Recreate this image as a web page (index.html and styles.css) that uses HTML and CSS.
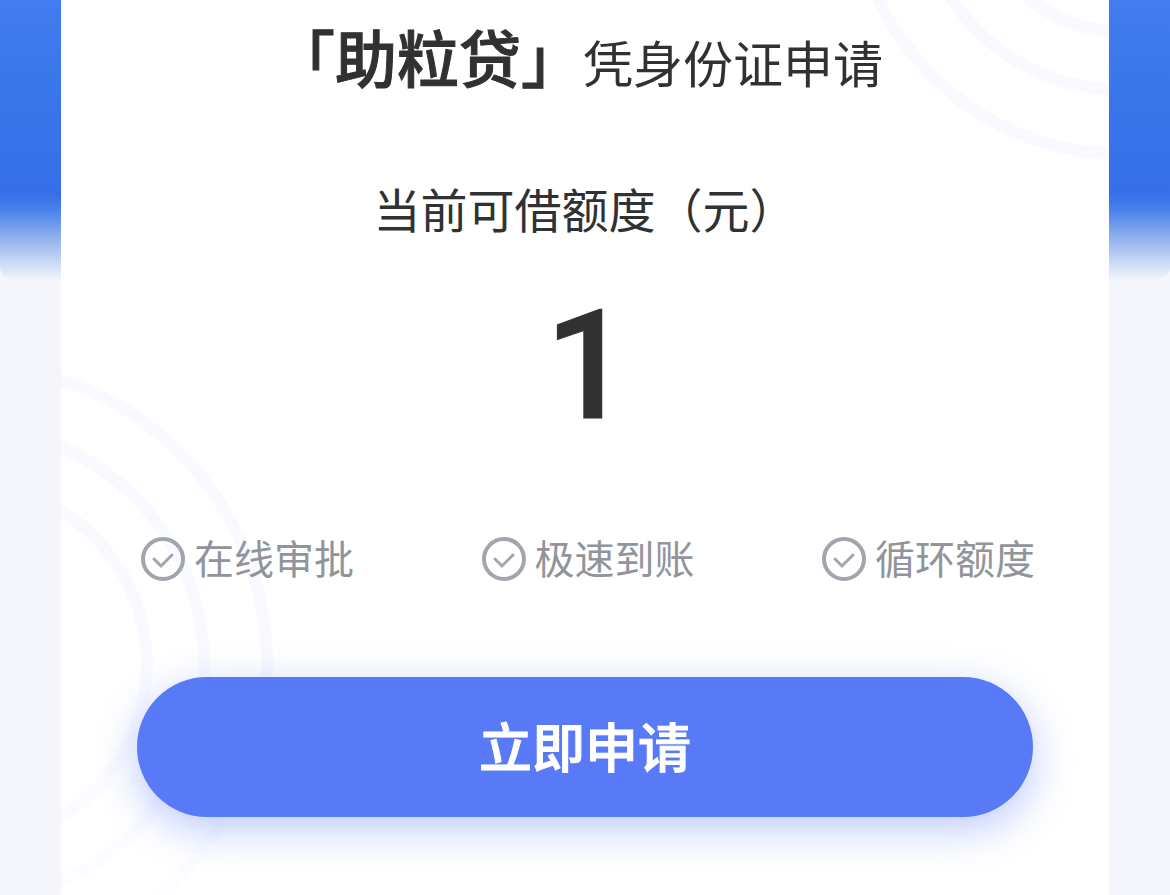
FILE: index.html
```html
<!DOCTYPE html>
<html lang="zh-CN">

<head>
    <meta charset="UTF-8" />
    <meta name="viewport" content="width=device-width, initial-scale=1" />
    <title>助粒贷</title>
    <link rel="stylesheet" href="styles.css">
</head>

<body>
    <div class="banner"></div>

    <main class="card">
        <svg class="rings rings-top" width="240" height="170" viewBox="0 0 240 170" aria-hidden="true">
            <circle cx="253" cy="-115" r="147" />
            <circle cx="253" cy="-115" r="205" />
            <circle cx="253" cy="-115" r="269" />
        </svg>
        <svg class="rings rings-left" width="220" height="620" viewBox="0 0 220 620" aria-hidden="true">
            <defs>
                <linearGradient id="fade" gradientUnits="userSpaceOnUse" x1="0" y1="0" x2="0" y2="540">
                    <stop offset="0.55" stop-color="#f9faff" />
                    <stop offset="1" stop-color="#fcfdff" />
                </linearGradient>
            </defs>
            <g stroke="url(#fade)">
                <circle cx="-93" cy="304" r="179" />
                <circle cx="-93" cy="304" r="236" />
                <circle cx="-93" cy="304" r="299" />
            </g>
        </svg>

        <h1 class="title"><strong>「助粒贷」</strong><span>凭身份证申请</span></h1>

        <p class="label">当前可借额度（元）</p>
        <p class="amount">1</p>

        <ul class="features">
            <li>
                <svg class="check" viewBox="0 0 44 44" aria-hidden="true">
                    <circle cx="22" cy="22" r="20" />
                    <path d="M13 22l7 7 11-11" />
                </svg>
                <span>在线审批</span>
            </li>
            <li>
                <svg class="check" viewBox="0 0 44 44" aria-hidden="true">
                    <circle cx="22" cy="22" r="20" />
                    <path d="M13 22l7 7 11-11" />
                </svg>
                <span>极速到账</span>
            </li>
            <li>
                <svg class="check" viewBox="0 0 44 44" aria-hidden="true">
                    <circle cx="22" cy="22" r="20" />
                    <path d="M13 22l7 7 11-11" />
                </svg>
                <span>循环额度</span>
            </li>
        </ul>

        <button type="button" class="apply">立即申请</button>
    </main>
</body>

</html>
```

FILE: styles.css
```css
* {
    box-sizing: border-box;
    margin: 0;
    padding: 0;
}

body {
    position: relative;
    background-color: #f4f6fb;
    color: #303133;
    font-family: "Noto Sans CJK SC", sans-serif;
}

/* Fundo azul atrás do cartão */
.banner {
    position: absolute;
    top: 0;
    left: 0;
    right: 0;
    height: 279px;
    border-radius: 0 0 12px 12px;
    background: linear-gradient(#437cf0 0, #3a78ea 70px, #366fe8 194px, #4a82ea 210px, #96b4ee 240px, #f0f4fb 279px);
}

.card {
    position: relative;
    display: flex;
    flex-direction: column;
    min-height: 100vh;
    margin: 0 61px;
    padding: 12px 76px 76px;
    overflow: hidden;
    background-color: #fff;
}

.rings {
    position: absolute;
    fill: none;
    stroke: #f9faff;
    stroke-width: 12px;
}

.rings-top {
    top: 0;
    right: 0;
}

.rings-left {
    top: 360px;
    left: 0;
}

.title,
.label,
.amount,
.features,
.apply {
    position: relative;
}

.title {
    display: flex;
    justify-content: center;
    align-items: baseline;
    padding-right: 14px;
    line-height: 88px;
    font-weight: 400;
    font-size: 50px;
}

.title strong {
    font-weight: 500;
    font-size: 62px;
    -webkit-text-stroke: 1px;
}

.label {
    margin-top: 69px;
    line-height: 68px;
    font-size: 47px;
    text-align: center;
}

.amount {
    margin-top: 48px;
    padding-left: 6px;
    line-height: 152px;
    font-family: Roboto, "Noto Sans CJK SC", sans-serif;
    font-weight: 500;
    font-size: 152px;
    text-align: center;
    -webkit-text-stroke: 1px;
}

/* Vantagens */
.features {
    display: flex;
    justify-content: space-between;
    margin: 95px -2px 0 4px;
    list-style: none;
    color: #91949b;
    font-size: 40px;
    line-height: 40px;
}

.features li {
    display: flex;
    align-items: flex-start;
    gap: 9px;
}

.check {
    width: 44px;
    height: 44px;
    fill: none;
    stroke: #a2a5ae;
    stroke-width: 4px;
}

.check path {
    stroke-width: 3px;
    stroke-linecap: round;
}

.apply {
    height: 140px;
    margin-top: 96px;
    padding-bottom: 4px;
    border: none;
    border-radius: 70px;
    background-color: #587af7;
    box-shadow: 0 12px 40px rgba(88, 122, 247, 0.4);
    color: #fff;
    font-family: inherit;
    font-weight: 500;
    font-size: 53px;
    -webkit-text-stroke: 1px;
    cursor: pointer;
}
```
